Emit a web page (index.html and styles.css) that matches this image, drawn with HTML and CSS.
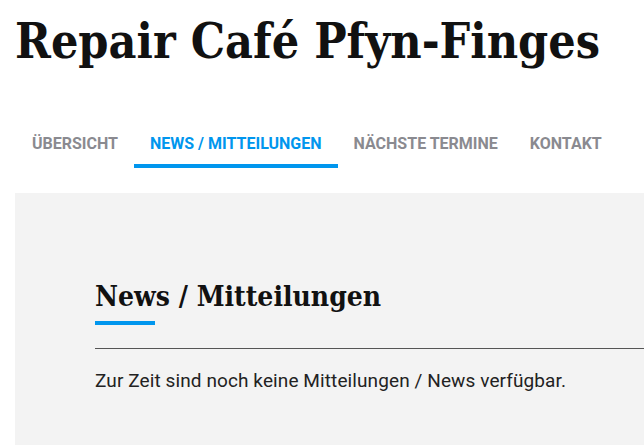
FILE: index.html
```html
<!DOCTYPE html>
<html>
<head>
    <title>Repair Café Pfyn-Finges</title>
    <link rel="stylesheet" href="styles.css">
</head>
<body>
    <header class="site-header">
        <h1 class="site-title">Repair Café Pfyn-Finges</h1>

        <!-- Main navigation -->
        <nav class="main-nav">
            <a class="nav-item" href="#">Übersicht</a>
            <a class="nav-item active" href="#">News / Mitteilungen</a>
            <a class="nav-item" href="#">Nächste Termine</a>
            <a class="nav-item" href="#">Kontakt</a>
        </nav>
    </header>

    <!-- News section -->
    <section class="panel">
        <h2 class="section-title">News / Mitteilungen</h2>
        <hr class="divider">
        <p class="notice">Zur Zeit sind noch keine Mitteilungen / News verfügbar.</p>
    </section>
</body>
</html>
```

FILE: styles.css
```css
body {
    margin: 0;
    padding: 0 0 0 15px;
    font-family: Roboto, "Liberation Sans", sans-serif;
    color: #222;
    background-color: #fff;
    overflow: hidden;
}

.site-title {
    margin: 0;
    padding-top: 11px;
    font-family: "DejaVu Serif", serif;
    font-stretch: condensed;
    font-size: 48px;
    font-weight: bold;
    line-height: 60px;
    white-space: nowrap;
    color: #111;
}

.main-nav {
    display: flex;
    margin-top: 63px;
    padding-left: 1px;
}

.nav-item {
    padding: 0 16px 10px;
    border-bottom: 4px solid transparent;
    font-size: 16px;
    font-weight: bold;
    line-height: 20px;
    white-space: nowrap;
    text-transform: uppercase;
    text-decoration: none;
    color: #8a8a90;
}

.nav-item.active {
    color: #0096ee;
    border-bottom-color: #0096ee;
}

.panel {
    box-sizing: border-box;
    margin-top: 25px;
    padding: 84px 0 0 80px;
    height: 252px;
    background-color: #f3f3f3;
}

.section-title {
    display: inline-block;
    margin: 0;
    padding-bottom: 8px;
    font-family: "DejaVu Serif", serif;
    font-stretch: condensed;
    font-size: 28px;
    font-weight: bold;
    line-height: 40px;
    color: #111;
    position: relative;
}

.section-title::after {
    content: "";
    position: absolute;
    left: 0;
    bottom: 0;
    width: 60px;
    height: 4px;
    background-color: #0096ee;
}

.divider {
    margin: 23px 0 0;
    border: 0;
    border-top: 1px solid #555;
}

.notice {
    margin: 20px 0 0;
    font-size: 19px;
    line-height: 24px;
    letter-spacing: 0.1px;
    white-space: nowrap;
    color: #222;
}
```
